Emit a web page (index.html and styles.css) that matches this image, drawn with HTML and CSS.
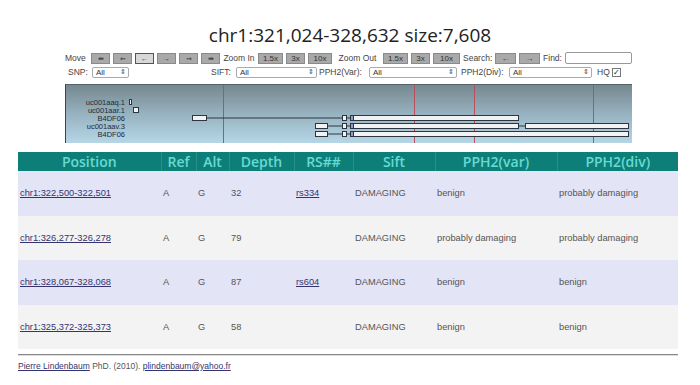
FILE: index.html
```html
<!DOCTYPE html>
<html lang="en">
<head>
  <meta charset="UTF-8">
  <title>chr1:321,024-328,632</title>
  <link rel="stylesheet" href="styles.css">
</head>
<body>
  <!-- Title -->
  <h1 class="title">chr1:321,024-328,632 size:7,608</h1>

  <!-- Navigation + track -->
  <div class="viewer">
    <div class="nav-row">
      <span class="lbl w-move">Move</span>
      <span class="btn w-arrow">&#8666;</span>
      <span class="btn w-arrow">&#8656;</span>
      <span class="btn w-arrow pressed">&#8592;</span>
      <span class="btn w-arrow">&#8594;</span>
      <span class="btn w-arrow">&#8658;</span>
      <span class="btn w-arrow">&#8667;</span>
      <span class="lbl w-zin">Zoom In</span>
      <span class="btn w-15">1.5x</span>
      <span class="btn w-3">3x</span>
      <span class="btn w-10">10x</span>
      <span class="lbl w-zout">Zoom Out</span>
      <span class="btn w-15">1.5x</span>
      <span class="btn w-3">3x</span>
      <span class="btn w-10b">10x</span>
      <span class="lbl w-search">Search:</span>
      <span class="btn w-sbtn">&#8592;</span>
      <span class="btn w-sbtn">&#8594;</span>
      <span class="lbl w-find">Find:</span>
      <span class="find-box"></span>
    </div>

    <div class="filter-row">
      <span class="flbl f-snp">SNP:</span>
      <span class="sel s-snp">All<span class="sel-arrow">&#8661;</span></span>
      <span class="flbl f-sift">SIFT:</span>
      <span class="sel s-sift">All<span class="sel-arrow">&#8661;</span></span>
      <span class="flbl f-var">PPH2(Var):</span>
      <span class="sel s-var">All<span class="sel-arrow">&#8661;</span></span>
      <span class="flbl f-div">PPH2(Div):</span>
      <span class="sel s-div">All<span class="sel-arrow">&#8661;</span></span>
      <span class="flbl f-hq">HQ</span>
      <span class="check">&#10003;</span>
    </div>

    <div class="panel">
      <svg width="566" height="58" viewBox="0 0 566 58">
        <defs>
          <linearGradient id="bg" x1="0" y1="0" x2="0" y2="1">
            <stop offset="0" stop-color="#76888f"/>
            <stop offset="0.5" stop-color="#97b2c0"/>
            <stop offset="1" stop-color="#b6d6e6"/>
          </linearGradient>
        </defs>
        <rect x="0" y="0" width="566" height="58" fill="url(#bg)"/>
        <g stroke="#b8505c" stroke-width="1">
          <line x1="157.5" y1="0" x2="157.5" y2="58"/>
          <line x1="348.5" y1="0" x2="348.5" y2="58"/>
          <line x1="408.5" y1="0" x2="408.5" y2="58"/>
          <line x1="527.5" y1="0" x2="527.5" y2="58"/>
        </g>
        <g class="trk-label" text-anchor="end">
          <text x="59" y="20">uc001aaq.1</text>
          <text x="59" y="28">uc001aar.1</text>
          <text x="59" y="36">B4DF06</text>
          <text x="59" y="44">uc001aav.3</text>
          <text x="59" y="52">B4DF06</text>
        </g>
        <g stroke="#2d3640" stroke-width="1" fill="#f2f2f2">
          <!-- uc001aaq.1 -->
          <rect x="63.5" y="14.5" width="2" height="5"/>
          <!-- uc001aar.1 -->
          <rect x="67.5" y="22.5" width="5" height="5"/>
          <!-- B4DF06 -->
          <line x1="140" y1="33" x2="276" y2="33"/>
          <rect x="126.5" y="30.5" width="14" height="5"/>
          <rect x="276.5" y="30.5" width="4" height="5"/>
          <line x1="281" y1="33" x2="284" y2="33"/>
          <rect x="284.5" y="30.5" width="3" height="5" fill="#8d9fc6"/>
          <rect x="287.5" y="30.5" width="165" height="5"/>
          <!-- uc001aav.3 -->
          <line x1="261" y1="41" x2="276" y2="41"/>
          <rect x="249.5" y="38.5" width="12" height="5"/>
          <rect x="276.5" y="38.5" width="4" height="5"/>
          <line x1="281" y1="41" x2="284" y2="41"/>
          <rect x="284.5" y="38.5" width="3" height="5" fill="#8d9fc6"/>
          <rect x="287.5" y="38.5" width="165" height="5"/>
          <line x1="453" y1="41" x2="459" y2="41"/>
          <rect x="459.5" y="38.5" width="103" height="5"/>
          <!-- B4DF06 -->
          <line x1="261" y1="49" x2="276" y2="49"/>
          <rect x="249.5" y="46.5" width="12" height="5"/>
          <rect x="276.5" y="46.5" width="4" height="5"/>
          <line x1="281" y1="49" x2="284" y2="49"/>
          <rect x="284.5" y="46.5" width="3" height="5" fill="#8d9fc6"/>
          <rect x="287.5" y="46.5" width="275" height="5"/>
        </g>
      </svg>
    </div>
  </div>

  <!-- SNP table -->
  <table class="snps">
    <colgroup>
      <col class="c-pos"><col class="c-ref"><col class="c-alt"><col class="c-depth">
      <col class="c-rs"><col class="c-sift"><col class="c-var"><col class="c-div">
    </colgroup>
    <thead>
      <tr>
        <th>Position</th><th>Ref</th><th>Alt</th><th>Depth</th>
        <th>RS##</th><th>Sift</th><th>PPH2(var)</th><th>PPH2(div)</th>
      </tr>
    </thead>
    <tbody>
      <tr>
        <td><a href="#">chr1:322,500-322,501</a></td><td>A</td><td>G</td><td>32</td>
        <td><a href="#">rs334</a></td><td>DAMAGING</td><td>benign</td><td>probably damaging</td>
      </tr>
      <tr>
        <td><a href="#">chr1:326,277-326,278</a></td><td>A</td><td>G</td><td>79</td>
        <td></td><td>DAMAGING</td><td>probably damaging</td><td>probably damaging</td>
      </tr>
      <tr>
        <td><a href="#">chr1:328,067-328,068</a></td><td>A</td><td>G</td><td>87</td>
        <td><a href="#">rs604</a></td><td>DAMAGING</td><td>benign</td><td>benign</td>
      </tr>
      <tr>
        <td><a href="#">chr1:325,372-325,373</a></td><td>A</td><td>G</td><td>58</td>
        <td></td><td>DAMAGING</td><td>benign</td><td>benign</td>
      </tr>
    </tbody>
  </table>

  <hr class="rule">
  <div class="footer">
    <a href="#">Pierre Lindenbaum</a> PhD. (2010). <a href="#">plindenbaum@yahoo.fr</a>
  </div>
</body>
</html>
```

FILE: styles.css
```css
body {
  margin: 0;
  background: #fff;
  font-family: "Liberation Sans", Arial, sans-serif;
  color: #444;
}

/* Title */
.title {
  margin: 22px 0 3px;
  font-family: "Open Sans", sans-serif;
  font-weight: normal;
  font-size: 19px;
  line-height: 26px;
  text-align: center;
  color: #222;
}

/* Viewer block */
.viewer {
  width: 567px;
  margin-left: 65px;
}

.nav-row,
.filter-row {
  display: flex;
  align-items: center;
  height: 14px;
  font-size: 8.5px;
  white-space: nowrap;
}

.nav-row {
  gap: 3px;
}

.lbl {
  text-align: center;
}

.w-move { width: 23px; text-align: left; }
.w-zin { width: 32px; }
.w-zout { width: 45px; }
.w-search { width: 29px; }
.w-find { width: 19px; }

.btn {
  box-sizing: border-box;
  height: 11px;
  line-height: 9px;
  font-size: 8px;
  text-align: center;
  background: #a9a9a9;
  border: 1px solid #8a8a8a;
  color: #333;
}

.btn.pressed {
  background: #d8d8d8;
  border-color: #555;
}

.w-arrow { width: 19px; font-size: 7px; }
.w-15 { width: 25px; }
.w-3 { width: 19px; }
.w-10 { width: 24px; }
.w-10b { width: 27px; }
.w-sbtn { width: 21px; }

.find-box {
  box-sizing: border-box;
  width: 67px;
  height: 12px;
  border: 1px solid #999;
  border-radius: 2px;
  background: #fff;
}

/* Filters */
.flbl {
  display: inline-block;
}

.f-snp { margin-left: 3px; width: 22px; }
.f-sift { margin-left: 82px; width: 23px; }
.f-var { margin-left: 2px; width: 48px; }
.f-div { margin-left: 4px; width: 46px; }
.f-hq { margin-left: 5px; width: 11px; }

.sel {
  box-sizing: border-box;
  display: flex;
  align-items: center;
  justify-content: space-between;
  height: 11px;
  margin-left: 2px;
  padding: 0 2px 0 3px;
  border: 1px solid #aaa;
  border-radius: 2px;
  background: #fff;
  color: #333;
  font-size: 8px;
}

.sel-arrow {
  font-size: 7px;
  color: #444;
}

.s-snp { width: 37px; }
.s-sift { width: 81px; }
.s-var { width: 88px; }
.s-div { width: 83px; }

.check {
  box-sizing: border-box;
  width: 9px;
  height: 9px;
  margin-left: 4px;
  border: 1px solid #777;
  background: #fff;
  font-size: 8px;
  line-height: 7px;
  text-align: center;
  color: #222;
}

/* Track panel */
.panel {
  margin-top: 5px;
  height: 59px;
  border-top: 1px solid #55636c;
  border-left: 1px solid #3a464e;
  border-right: 1px solid #4a5660;
  box-sizing: border-box;
}

.panel svg {
  display: block;
}

.trk-label {
  font-family: "Liberation Sans", Arial, sans-serif;
  font-size: 7.5px;
  fill: #1f2a36;
}

/* Table */
.snps {
  width: 660px;
  margin: 9px 0 0 18px;
  border-collapse: collapse;
  table-layout: fixed;
}

.c-pos { width: 143px; }
.c-ref { width: 35px; }
.c-alt { width: 33px; }
.c-depth { width: 65px; }
.c-rs { width: 59px; }
.c-sift { width: 82px; }
.c-var { width: 122px; }
.c-div { width: 121px; }

.snps th {
  height: 19px;
  padding: 0;
  background: #0e7f78;
  color: #66dbd3;
  font-family: "Open Sans", sans-serif;
  font-weight: 600;
  font-size: 14px;
  line-height: 19px;
  border-left: 1px solid #2a8f88;
}

.snps th:first-child {
  border-left: none;
}

.snps td {
  height: 44.5px;
  padding: 0 2px;
  font-size: 9.3px;
  color: #555;
  white-space: nowrap;
}

.snps tbody tr:nth-child(odd) {
  background: #e4e4f7;
}

.snps tbody tr:nth-child(even) {
  background: #f3f3f3;
}

.snps a {
  color: #34346e;
}

.rule {
  width: 660px;
  margin: 5px 0 0 18px;
  border: none;
  border-top: 1px solid #888;
  border-bottom: 1px solid #ddd;
}

.footer {
  margin: 5px 0 0 18px;
  font-size: 8.5px;
  color: #555;
}

.footer a {
  color: #34346e;
}
```
